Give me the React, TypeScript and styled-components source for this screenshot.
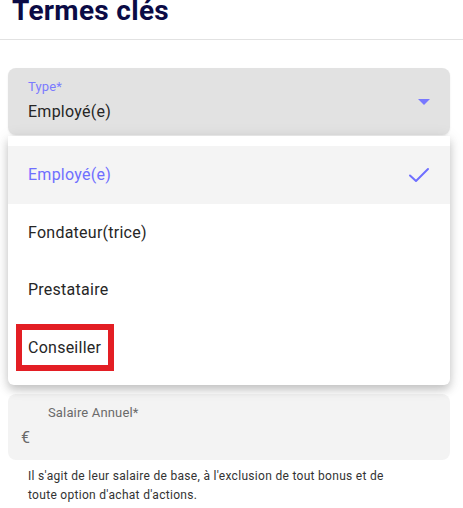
import React from "react";
import styled, { createGlobalStyle } from "styled-components";

const Global = createGlobalStyle`
  html, body { margin: 0; padding: 0; background: #fff; }
  body { font-family: Roboto, "Noto Sans", Arial, sans-serif; overflow: hidden; }
  * { box-sizing: border-box; }
`;

const Page = styled.div`
  width: 463px;
  height: 508px;
  overflow: hidden;
  display: flex;
  flex-direction: column;
`;

const Header = styled.header`
  height: 40px;
  border-bottom: 1px solid #e2e2e2;
  padding-left: 12px;
  overflow: hidden;
`;

const Title = styled.h1`
  margin: -3px 0 0;
  font-size: 28px;
  line-height: 28px;
  font-weight: 700;
  letter-spacing: 0.3px;
  color: #0b0b45;
`;

const Form = styled.div`
  padding: 28px 13px 0 8px;
  display: flex;
  flex-direction: column;
`;

const SelectBox = styled.div`
  height: 67px;
  background: #e2e2e2;
  border-radius: 8px;
  padding: 0 20px;
  display: flex;
  align-items: center;
  box-shadow: 0 1px 2px rgba(0,0,0,0.08);
`;

const SelectText = styled.div`
  flex: 1;
  display: flex;
  flex-direction: column;
  margin-top: -2px;
`;

const FloatLabel = styled.span<{ $color: string }>`
  font-size: 13px;
  line-height: 18px;
  letter-spacing: 0.15px;
  color: ${(p) => p.$color};
`;

const Value = styled.span`
  margin-top: 4px;
  font-size: 16px;
  line-height: 24px;
  letter-spacing: 0.25px;
  color: #262626;
`;

const Arrow = styled.span`
  width: 0;
  height: 0;
  border-left: 6px solid transparent;
  border-right: 6px solid transparent;
  border-top: 6px solid #7878ff;
  margin: 0;
`;

const Menu = styled.ul`
  list-style: none;
  margin: 1px 0 0;
  padding: 10px 0 9px;
  background: #fff;
  border-radius: 0 0 6px 6px;
  box-shadow: 0 5px 8px rgba(0,0,0,0.18), 0 2px 16px rgba(0,0,0,0.1);
  position: relative;
  z-index: 2;
`;

const Item = styled.li<{ $selected?: boolean }>`
  height: 57.5px;
  display: flex;
  align-items: center;
  justify-content: space-between;
  padding: 0 20px 0 20px;
  font-size: 16px;
  letter-spacing: 0.25px;
  color: ${(p) => (p.$selected ? "#6f6fff" : "#262626")};
  background: ${(p) => (p.$selected ? "#f4f4f4" : "#fff")};
`;

const Highlight = styled.span`
  margin-left: -12px;
  padding: 0 7px 0 6px;
  height: 47px;
  display: inline-flex;
  align-items: center;
  border: 6px solid #e31e24;
`;

const Field = styled.div`
  margin-top: 9px;
  height: 66px;
  background: #f3f3f3;
  border-radius: 8px;
  padding: 10px 13px 0;
  display: flex;
  flex-direction: column;
`;

const FieldLabel = styled.span`
  font-size: 13px;
  line-height: 18px;
  letter-spacing: 0.15px;
  color: #6a6a6a;
  padding-left: 27px;
`;

const Currency = styled.span`
  margin-top: 6px;
  font-size: 16px;
  line-height: 20px;
  color: #6a6a6a;
`;

const Helper = styled.p`
  margin: 7px 0 0;
  padding: 0 40px 0 20px;
  font-size: 12px;
  line-height: 19px;
  letter-spacing: 0.3px;
  color: #333;
`;

const Check = () => (
  <svg width="22" height="16" viewBox="0 0 22 16" fill="none">
    <path d="M2 8.5 L8 14 L20 2" stroke="#6f6fff" strokeWidth="2" strokeLinecap="round" strokeLinejoin="round" />
  </svg>
);

export default function App() {
  return (
    <Page>
      <Global />
      <Header>
        <Title>Termes clés</Title>
      </Header>
      <Form>
        <SelectBox>
          <SelectText>
            <FloatLabel $color="#7b7bff">Type*</FloatLabel>
            <Value>Employé(e)</Value>
          </SelectText>
          <Arrow />
        </SelectBox>
        <Menu>
          <Item $selected>
            <span>Employé(e)</span>
            <Check />
          </Item>
          <Item>Fondateur(trice)</Item>
          <Item>Prestataire</Item>
          <Item>
            <Highlight>Conseiller</Highlight>
          </Item>
        </Menu>
        <Field>
          <FieldLabel>Salaire Annuel*</FieldLabel>
          <Currency>€</Currency>
        </Field>
        <Helper>
          Il s'agit de leur salaire de base, à l'exclusion de tout bonus et de toute option d'achat d'actions.
        </Helper>
      </Form>
    </Page>
  );
}
